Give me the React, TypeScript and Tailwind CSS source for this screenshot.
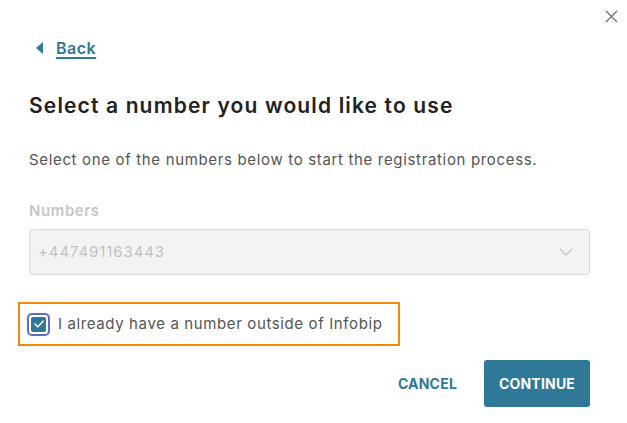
const App = () => {
    return (
        <div className="relative w-[627px] h-[423px] bg-white overflow-hidden" style={{ fontFamily: "Inter, 'Noto Sans', sans-serif" }}>
            {/* close button */}
            <button className="absolute top-[9px] right-[9px] w-[14px] h-[14px] flex items-center justify-center text-[#6b6b6b]">
                <svg width="13" height="13" viewBox="0 0 13 13" fill="none" stroke="currentColor" strokeWidth={1.2}>
                    <path d="M1 1l11 11M12 1L1 12" />
                </svg>
            </button>

            <div className="pl-[29px] pr-[37px] pt-[38px]">
                <a href="#" className="flex items-center gap-[12px] text-[#2e7898] h-[20px]">
                    <svg width="8" height="12" viewBox="0 0 8 12" className="ml-[7px]">
                        <path d="M7 0v12L0 6z" fill="currentColor" />
                    </svg>
                    <span className="text-[16px] font-semibold underline underline-offset-[3px] decoration-[1.5px] tracking-[0.5px]">Back</span>
                </a>

                <h1 className="mt-[34px] text-[21px] font-semibold text-[#222] leading-[28px] tracking-[1.15px]">
                    Select a number you would like to use
                </h1>

                <p className="mt-[30px] text-[15px] text-[#555] leading-[20px] tracking-[0.66px]">
                    Select one of the numbers below to start the registration process.
                </p>

                <div className="mt-[31px] text-[15px] font-semibold text-[#c6c6c6] leading-[20px] tracking-[0.6px]">Numbers</div>
                <div className="mt-[8px] h-[46px] rounded-[3px] border border-[#dcdcdc] bg-[#f3f3f2] flex items-center justify-between pl-[8px] pr-[16px]">
                    <span className="text-[15px] text-[#c2c2c2] tracking-[0.9px]">+447491163443</span>
                    <svg width="14" height="8" viewBox="0 0 14 8" fill="none" stroke="#c6c6c6" strokeWidth={1.2}>
                        <path d="M1 1l6 6 6-6" />
                    </svg>
                </div>
            </div>

            <div className="ml-[18px] mt-[27px] w-[382px] h-[44px] border-2 border-[#f5870f] flex items-center pl-[7px] gap-[8px]">
                <div className="w-[23px] h-[23px] rounded-[5px] border-2 border-[#5a6fbf] p-[2px]">
                    <div className="w-full h-full rounded-[2px] bg-[#2e7898] flex items-center justify-center">
                        <svg width="10" height="8" viewBox="0 0 10 8" fill="none" stroke="white" strokeWidth={1.6} strokeLinecap="round" strokeLinejoin="round">
                            <path d="M1 4l2.8 2.8L9 1.2" />
                        </svg>
                    </div>
                </div>
                <span className="text-[15px] text-[#555] tracking-[0.62px]">I already have a number outside of Infobip</span>
            </div>

            <div className="mt-[14px] pr-[37px] flex justify-end items-center gap-[27px]">
                <button className="text-[14px] font-bold text-[#2e7898] tracking-[0.2px]">CANCEL</button>
                <button className="w-[106px] h-[47px] rounded-[3px] bg-[#2e7898] text-white text-[14px] font-bold tracking-[0.2px]">CONTINUE</button>
            </div>
        </div>
    );
};

export default App;
